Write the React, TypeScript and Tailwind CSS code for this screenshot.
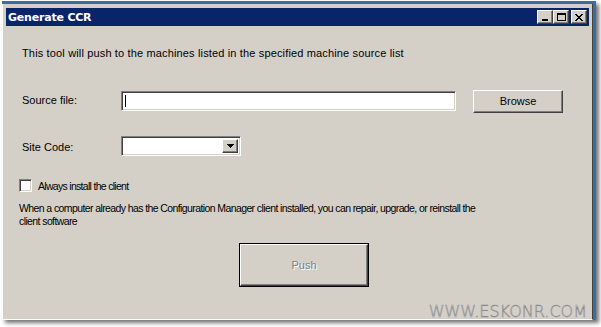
import React from "react";

const face = "[font-family:'Liberation_Sans',Arial,sans-serif]";

function TitleButton({ children, className = "" }: { children: React.ReactNode; className?: string }) {
    return (
        <div className={`w-[16px] h-[14px] bg-[#d4d0c8] border-t border-l border-t-white border-l-white border-b border-r border-b-[#404040] border-r-[#404040] shadow-[inset_-1px_-1px_#808080] flex items-center justify-center ${className}`}>
            {children}
        </div>
    );
}

function Raised({ children, className = "" }: { children?: React.ReactNode; className?: string }) {
    return (
        <div className={`bg-[#d4d0c8] border-t border-l border-t-white border-l-white border-b border-r border-b-[#404040] border-r-[#404040] shadow-[inset_-1px_-1px_#808080] flex items-center justify-center ${className}`}>
            {children}
        </div>
    );
}

function Sunken({ children, className = "" }: { children?: React.ReactNode; className?: string }) {
    return (
        <div className={`bg-white border-t border-l border-t-[#808080] border-l-[#808080] border-b border-r border-b-white border-r-white shadow-[inset_1px_1px_#404040,inset_-1px_-1px_#d4d0c8] ${className}`}>
            {children}
        </div>
    );
}

export default function App() {
    return (
        <div className={`relative w-[601px] h-[327px] bg-white pt-[1px] pl-[2px] overflow-hidden ${face}`}>
            <div className="w-[594px] h-[319px] border-t-[3px] border-r-[3px] border-[#3d6ba3] shadow-[3px_3px_4px_rgba(0,0,0,0.55)]">
                <div className="h-full bg-[#d4d0c8] border-r border-r-[#404040] border-l border-l-white border-b border-b-white pt-[4px] pl-[3px] pr-[3px]">
                    {/* title bar */}
                    <div className="h-[18px] bg-[#0a246a] flex items-center justify-between pl-[2px] pr-[2px]">
                        <span className="text-white text-[11px] font-bold [font-family:'DejaVu_Sans',Verdana,sans-serif] leading-none tracking-[-0.2px]">
                            Generate CCR
                        </span>
                        <div className="flex items-center">
                            <TitleButton>
                                <div className="w-[6px] h-[2px] bg-black mt-[6px] mr-[1px]" />
                            </TitleButton>
                            <TitleButton>
                                <div className="w-[9px] h-[8px] border border-black border-t-2" />
                            </TitleButton>
                            <TitleButton className="ml-[2px]">
                                <svg width="8" height="7" viewBox="0 0 8 7" shapeRendering="crispEdges">
                                    <path d="M0 0h2v1h-2zM6 0h2v1h-2zM1 1h2v1h-2zM5 1h2v1h-2zM2 2h4v1h-4zM3 3h2v1h-2zM2 4h4v1h-4zM1 5h2v1h-2zM5 5h2v1h-2zM0 6h2v1h-2zM6 6h2v1h-2z" fill="black" />
                                </svg>
                            </TitleButton>
                        </div>
                    </div>

                    {/* body */}
                    <div className="text-[11px] leading-[13px] text-black">
                        <p className="mt-[21px] ml-[16px] tracking-[0.15px]">
                            This tool will push to the machines listed in the specified machine source list
                        </p>

                        <div className="mt-[31px] flex items-start">
                            <span className="w-[115px] pl-[16px] pt-[3px] shrink-0">Source file:</span>
                            <Sunken className="w-[335px] h-[20px] relative">
                                <div className="absolute left-[3px] top-[3px] w-px h-[12px] bg-black" />
                            </Sunken>
                            <Raised className="ml-[17px] w-[90px] h-[23px] -mt-[1px]">
                                <span>Browse</span>
                            </Raised>
                        </div>

                        <div className="mt-[23px] flex items-center">
                            <span className="w-[115px] pl-[16px] pt-[2px] shrink-0">Site Code:</span>
                            <Sunken className="w-[120px] h-[20px] flex justify-end p-[2px]">
                                <Raised className="w-[16px] h-full">
                                    <svg width="7" height="4" viewBox="0 0 7 4" shapeRendering="crispEdges">
                                        <path d="M0 0h7v1h-7zM1 1h5v1h-5zM2 2h3v1h-3zM3 3h1v1h-1z" fill="black" />
                                    </svg>
                                </Raised>
                            </Sunken>
                        </div>

                        <label className="mt-[22px] ml-[13px] flex items-center gap-[6px]">
                            <Sunken className="w-[13px] h-[13px]" />
                            <span className="pt-[2px] text-[10.5px] tracking-[-0.7px]">Always install the client</span>
                        </label>

                        <p className="mt-[9px] ml-[13px] w-[470px] text-[10.5px] leading-[13px] tracking-[-0.6px]">
                            When a computer already has the Configuration Manager client installed, you can repair, upgrade, or reinstall the client software
                        </p>

                        <div className="mt-[15px] ml-[233px] w-[130px] h-[44px] border border-black">
                            <Raised className="w-full h-full">
                                <span className="text-[#808080] [text-shadow:1px_1px_0_#ffffff]">Push</span>
                            </Raised>
                        </div>
                    </div>
                </div>
            </div>
            <span className="absolute right-[14px] bottom-[7px] text-[16px] leading-none text-white [-webkit-text-stroke:0.6px_#8a8a8a] [font-family:'DejaVu_Sans','Liberation_Sans',sans-serif] font-light">
                WWW.ESKONR.COM
            </span>
        </div>
    );
}
